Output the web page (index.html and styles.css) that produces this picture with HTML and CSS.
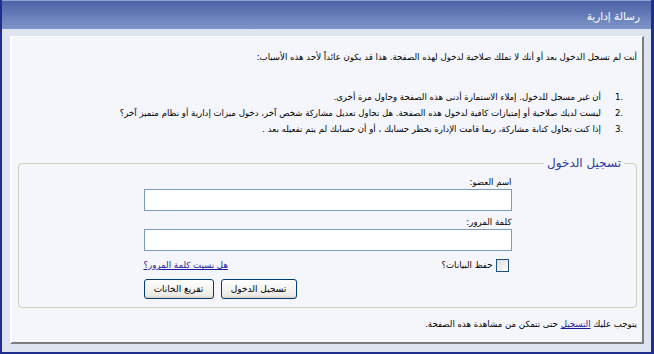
FILE: index.html
```html
<!DOCTYPE html>
<html lang="ar" dir="rtl">
<head>
<meta charset="utf-8">
<title>رسالة إدارية</title>
<link rel="stylesheet" href="styles.css">
</head>
<body>
<div class="win">
  <div class="hdr">رسالة إدارية</div>
  <div class="main">
    <div class="panel">
      <p class="intro">أنت لم تسجل الدخول بعد أو أنك لا تملك صلاحية لدخول لهذه الصفحة. هذا قد يكون عائداً لأحد هذه الأسباب:</p>
      <ul class="reasons">
        <li><span class="num">1.</span><span>أن غير مسجل للدخول. إملاء الاستمارة أدنى هذه الصفحة وحاول مرة أخرى.</span></li>
        <li><span class="num">2.</span><span>ليست لديك صلاحية أو إمتيازات كافية لدخول هذه الصفحة. هل تحاول تعديل مشاركة شخص آخر، دخول ميزات إدارية أو نظام متميز آخر؟</span></li>
        <li><span class="num">3.</span><span>إذا كنت تحاول كتابة مشاركة، ربما قامت الإدارة بحظر حسابك ، أو أن حسابك لم يتم تفعيله بعد .</span></li>
      </ul>
      <fieldset class="login">
        <legend>تسجيل الدخول</legend>
        <div class="form">
          <label class="lbl" for="u">اسم العضو:</label>
          <input class="txt" id="u" type="text">
          <label class="lbl" for="p">كلمة المرور:</label>
          <input class="txt" id="p" type="password">
          <div class="row">
            <label class="remember"><span class="box"></span>حفظ البيانات؟</label>
            <a class="link" href="#">هل نسيت كلمة المرور؟</a>
          </div>
          <div class="btns">
            <button class="btn b1" type="button">تسجيل الدخول</button>
            <button class="btn b2" type="button">تفريغ الخانات</button>
          </div>
        </div>
      </fieldset>
      <p class="foot">يتوجب عليك <a class="link" href="#">التسجيل</a> حتى تتمكن من مشاهدة هذه الصفحة.</p>
    </div>
  </div>
</div>
</body>
</html>
```
FILE: styles.css
```css
html, body {
  margin: 0;
  padding: 0;
  background: #ffffff;
}
body {
  font-family: Tahoma, "DejaVu Sans", sans-serif;
  font-size: 8.6px;
  color: #000;
}
.win {
  width: 654px;
  height: 354px;
  box-sizing: border-box;
  border-left: 2px solid #1f2d8c;
  border-right: 3px solid #1f2d8c;
  border-bottom: 2px solid #1f2d8c;
  background: #dfe4f1;
  display: flex;
  flex-direction: column;
}
.hdr {
  height: 29px;
  flex: none;
  box-sizing: border-box;
  background: linear-gradient(#4c63a7, #7f95c9);
  color: #fff;
  font-size: 10.5px;
  line-height: 30px;
  padding-right: 11px;
  border-top: 1px solid #8ea3d6;
}
.main {
  flex: 1;
  min-height: 0;
  padding: 7px 7px 8px 8px;
  display: flex;
}
.panel {
  flex: 1;
  background: #f5f5fc;
  border-top: 1px solid #ffffff;
  border-right: 2px solid #7d7d7d;
  border-bottom: 2px solid #7d7d7d;
  border-left: 2px solid #ffffff;
  padding: 12px 5px 0 5px;
}
.intro {
  margin: 0;
  line-height: 16px;
}
.reasons {
  list-style: none;
  margin: 24px 0 0 0;
  padding: 0;
}
.reasons li {
  display: flex;
  line-height: 16px;
}
.num {
  direction: ltr;
  width: 36px;
  flex: none;
  text-align: center;
}
.login {
  margin: 19px 0 0 1px;
  padding: 5px 0 8px 0;
  border: 1px solid #d0d0bf;
  border-radius: 4px;
}
.login legend {
  color: #2c3a9e;
  font-size: 12px;
  line-height: 14px;
  padding: 0 3px;
  margin-right: 12px;
}
.form {
  width: 368px;
  margin: 0 auto;
  display: flex;
  flex-direction: column;
}
.lbl {
  line-height: 14px;
}
.txt {
  height: 22px;
  box-sizing: border-box;
  border: 1px solid #7f9db9;
  background: #fff;
  margin: 0 0 4px 0;
  padding: 0 3px;
}
.row {
  display: flex;
  justify-content: space-between;
  align-items: center;
  margin-top: 2px;
  height: 16px;
}
.remember {
  display: flex;
  align-items: center;
  gap: 3px;
  margin-right: 3px;
}
.box {
  width: 13px;
  height: 13px;
  box-sizing: border-box;
  border: 1px solid #1c5180;
  background: linear-gradient(135deg, #dcdcd7, #fff);
}
.link {
  color: #1a1a9e;
  text-decoration: underline;
}
.btns {
  display: flex;
  justify-content: flex-end;
  gap: 7px;
  margin-top: 6px;
}
.btn {
  font-family: inherit;
  font-size: 9px;
  height: 20px;
  padding: 0;
  border: 1px solid #003c74;
  border-radius: 3px;
  background: linear-gradient(#ffffff, #ecebe6 85%, #d6d0c5);
  color: #000;
}
.b1 { width: 76px; }
.b2 { width: 70px; }
.foot {
  margin: 8px 0 0 0;
  line-height: 16px;
}
```
